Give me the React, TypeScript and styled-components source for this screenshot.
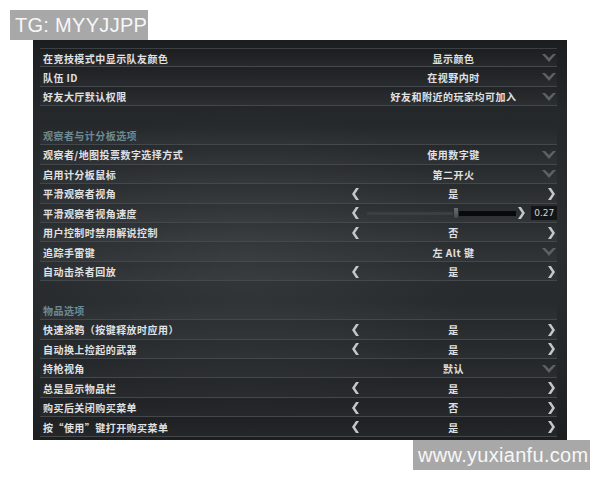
import styled, { createGlobalStyle } from "styled-components";

const GlobalStyle = createGlobalStyle`
  html, body {
    margin: 0;
    padding: 0;
    background: #ffffff;
  }
  body {
    font-family: "Noto Sans CJK SC", "Noto Sans", sans-serif;
  }
`;

const Page = styled.div`
  width: 600px;
  height: 480px;
  padding-top: 10px;
  box-sizing: border-box;
  display: flex;
  flex-direction: column;
  overflow: hidden;
`;

const Tag = styled.div<{ $left: number; $width: number }>`
  margin-left: ${({ $left }) => $left}px;
  width: ${({ $width }) => $width}px;
  height: 30px;
  background: #a8a8a8;
  color: #f7f7f7;
  font-family: "Liberation Sans", Arial, sans-serif;
  font-size: 20px;
  line-height: 30px;
  padding-left: 5px;
  box-sizing: border-box;
  letter-spacing: 0.3px;
  white-space: nowrap;
  overflow: hidden;
`;

const Panel = styled.div`
  margin-left: 33px;
  width: 534px;
  height: 400px;
  box-sizing: border-box;
  padding: 8px 10px 3px 7px;
  background:
    radial-gradient(ellipse 60% 55% at 40% 55%, rgba(70, 76, 80, 0.35), transparent 70%),
    linear-gradient(180deg, #1b1d1f 0%, #25282b 18%, #2b2e31 50%, #24272a 80%, #1c1e20 100%);
  display: flex;
  flex-direction: column;
`;

const RowBox = styled.div<{ $line?: boolean; $first?: boolean }>`
  height: 19.45px;
  box-sizing: border-box;
  display: grid;
  grid-template-columns: 1fr 207px;
  align-items: center;
  padding-top: 1px;
  border-top: ${({ $first }) => ($first ? "1px solid #3c4043" : "none")};
  border-bottom: ${({ $line }) => ($line ? "1px solid #44484b" : "1px solid transparent")};
  background: ${({ $line }) =>
    $line
      ? "linear-gradient(180deg, rgba(255,255,255,0) 0%, rgba(255,255,255,0.035) 100%)"
      : "none"};
`;

const Label = styled.span<{ $header?: boolean }>`
  padding-left: 3px;
  font-size: 10px;
  font-weight: 700;
  letter-spacing: 0.45px;
  color: ${({ $header }) => ($header ? "#6c8b93" : "#e0e1e2")};
  white-space: nowrap;
`;

const Control = styled.div`
  display: grid;
  grid-template-columns: 14px 1fr 14px;
  align-items: center;
  height: 100%;
`;

const Value = styled.span`
  text-align: center;
  font-size: 10px;
  font-weight: 700;
  letter-spacing: 0.5px;
  color: #e0e1e2;
  white-space: nowrap;
`;

const SliderBox = styled.div`
  display: flex;
  align-items: center;
  height: 100%;
`;

const Track = styled.div`
  position: relative;
  width: 151px;
  margin-left: 6px;
  height: 5px;
  display: flex;
`;

const TrackFill = styled.div`
  background: #3b3f42;
  height: 3px;
  margin-top: 1px;
`;

const TrackRest = styled.div`
  flex: 1;
  background: #080909;
  height: 5px;
`;

const Thumb = styled.div`
  position: absolute;
  top: -4px;
  width: 6px;
  height: 12px;
  margin-left: -3px;
  background: linear-gradient(180deg, #6a6e71, #45494c);
  border: 1px solid #2a2d30;
  box-sizing: border-box;
  border-radius: 1px;
`;

const Readout = styled.span`
  margin-left: 5px;
  width: 26px;
  height: 14px;
  background: #141517;
  color: #d4d6d8;
  font-family: "DejaVu Sans", sans-serif;
  font-size: 9px;
  line-height: 14px;
  text-align: center;
`;

const ArrowSvg = styled.svg<{ $flip?: boolean }>`
  width: 7px;
  height: 12px;
  justify-self: ${({ $flip }) => ($flip ? "end" : "start")};
  margin: 0 2px;
  transform: ${({ $flip }) => ($flip ? "scaleX(-1)" : "none")};
`;

const ChevronSvg = styled.svg`
  width: 14px;
  height: 8px;
  justify-self: end;
  margin-right: 1px;
`;

function Arrow({ flip }: { flip?: boolean }) {
  return (
    <ArrowSvg $flip={flip} viewBox="0 0 7 12">
      <polygon points="4,0 7,0 3,6 7,12 4,12 0,6" fill="#c4c7c9" />
    </ArrowSvg>
  );
}

function Chevron() {
  return (
    <ChevronSvg viewBox="0 0 14 8">
      <polygon points="0,0 3,0 7,4 11,0 14,0 7,8" fill="#5c6164" />
    </ChevronSvg>
  );
}

type Row =
  | { kind: "select"; label: string; value: string }
  | { kind: "cycle"; label: string; value: string }
  | { kind: "slider"; label: string; value: number; text: string }
  | { kind: "header"; label: string }
  | { kind: "blank" };

const rows: Row[] = [
  { kind: "select", label: "在竞技模式中显示队友颜色", value: "显示颜色" },
  { kind: "select", label: "队伍 ID", value: "在视野内时" },
  { kind: "select", label: "好友大厅默认权限", value: "好友和附近的玩家均可加入" },
  { kind: "blank" },
  { kind: "header", label: "观察者与计分板选项" },
  { kind: "select", label: "观察者/地图投票数字选择方式", value: "使用数字键" },
  { kind: "select", label: "启用计分板鼠标", value: "第二开火" },
  { kind: "cycle", label: "平滑观察者视角", value: "是" },
  { kind: "slider", label: "平滑观察者视角速度", value: 0.6, text: "0.27" },
  { kind: "cycle", label: "用户控制时禁用解说控制", value: "否" },
  { kind: "select", label: "追踪手雷键", value: "左 Alt 键" },
  { kind: "cycle", label: "自动击杀者回放", value: "是" },
  { kind: "blank" },
  { kind: "header", label: "物品选项" },
  { kind: "cycle", label: "快速涂鸦（按键释放时应用）", value: "是" },
  { kind: "cycle", label: "自动换上捡起的武器", value: "是" },
  { kind: "select", label: "持枪视角", value: "默认" },
  { kind: "cycle", label: "总是显示物品栏", value: "是" },
  { kind: "cycle", label: "购买后关闭购买菜单", value: "否" },
  { kind: "cycle", label: "按“使用”键打开购买菜单", value: "是" },
];

function SettingRow({ row, first }: { row: Row; first: boolean }) {
  if (row.kind === "blank") return <RowBox />;
  if (row.kind === "header")
    return (
      <RowBox $line>
        <Label $header>{row.label}</Label>
      </RowBox>
    );
  return (
    <RowBox $line $first={first}>
      <Label>{row.label}</Label>
      {row.kind === "select" && (
        <Control>
          <span />
          <Value>{row.value}</Value>
          <Chevron />
        </Control>
      )}
      {row.kind === "cycle" && (
        <Control>
          <Arrow />
          <Value>{row.value}</Value>
          <Arrow flip />
        </Control>
      )}
      {row.kind === "slider" && (
        <SliderBox>
          <Arrow />
          <Track>
            <TrackFill style={{ width: `${row.value * 100}%` }} />
            <TrackRest />
            <Thumb style={{ left: `${row.value * 100}%` }} />
          </Track>
          <Arrow flip />
          <Readout>{row.text}</Readout>
        </SliderBox>
      )}
    </RowBox>
  );
}

export default function App() {
  return (
    <>
      <GlobalStyle />
      <Page>
        <Tag $left={10} $width={138}>TG: MYYJJPP</Tag>
        <Panel>
          {rows.map((row, i) => (
            <SettingRow key={i} row={row} first={i === 0} />
          ))}
        </Panel>
        <Tag $left={413} $width={177}>www.yuxianfu.com</Tag>
      </Page>
    </>
  );
}
